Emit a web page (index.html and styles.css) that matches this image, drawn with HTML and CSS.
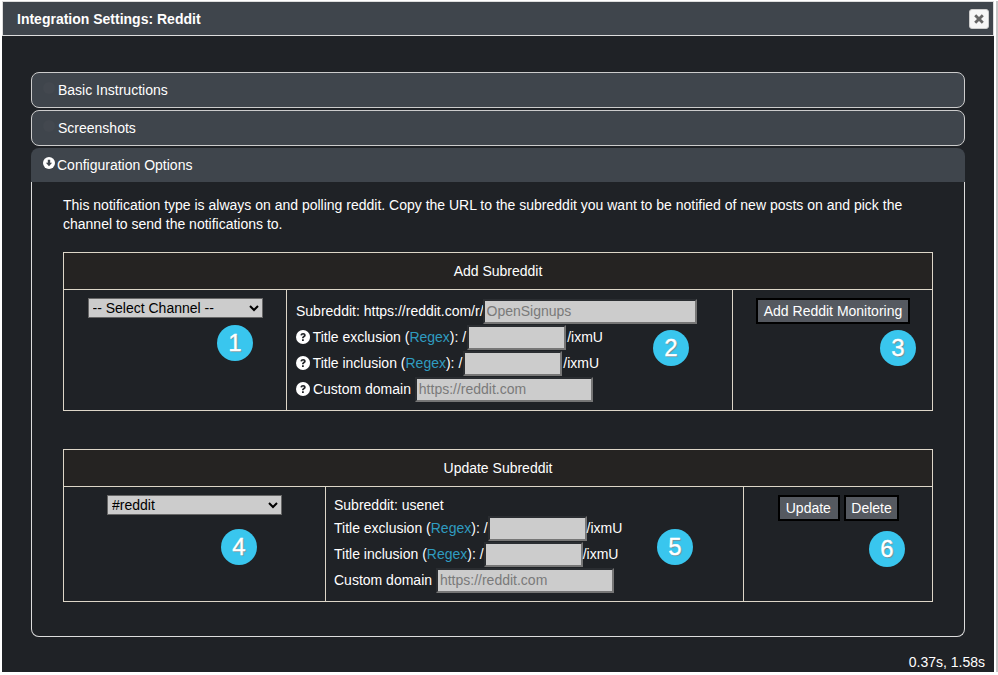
FILE: index.html

```html
<!DOCTYPE html>
<html lang="en">
<head>
  <meta charset="UTF-8" />
  <title>Integration Settings: Reddit</title>
  <link rel="stylesheet" href="styles.css">
</head>
<body>
  <div class="window">
    <div class="titlebar">
      <span class="title">Integration Settings: Reddit</span>
      <button class="close" aria-label="Close">
        <svg width="12" height="12" viewBox="0 0 12 12"><path d="M1.2 3.2 3.2 1.2 6 4 8.8 1.2 10.8 3.2 8 6 10.8 8.8 8.8 10.8 6 8 3.2 10.8 1.2 8.8 4 6z"/></svg>
      </button>
    </div>

    <div class="content">
      <h3 class="acc-head">
        <svg class="acc-icon faint" width="12" height="12" viewBox="0 0 12 12"><circle cx="6" cy="6" r="6"/></svg>
        Basic Instructions
      </h3>
      <h3 class="acc-head">
        <svg class="acc-icon faint" width="12" height="12" viewBox="0 0 12 12"><circle cx="6" cy="6" r="6"/></svg>
        Screenshots
      </h3>
      <h3 class="acc-head active">
        <svg class="acc-icon" width="12" height="12" viewBox="0 0 12 12"><circle cx="6" cy="6" r="6" fill="#fff"/><path d="M4.8 2.8h2.4v3h1.9L6 9.2 2.9 5.8h1.9z" fill="#3f454c"/></svg>
        Configuration Options
      </h3>

      <div class="acc-panel">
        <p class="intro">This notification type is always on and polling reddit. Copy the URL to the subreddit you want to be notified of new posts on and pick the channel to send the notifications to.</p>

        <table class="grid add">
          <colgroup><col class="c1"><col class="c2"><col class="c3"></colgroup>
          <tr><th colspan="3">Add Subreddit</th></tr>
          <tr>
            <td class="center">
              <select class="channel"><option>-- Select Channel --</option></select>
              <span class="badge b1">1</span>
            </td>
            <td class="fields">
              <div class="row">Subreddit: https://reddit.com/r/<input class="wide" placeholder="OpenSignups"></div>
              <div class="row">
                <svg class="help" width="14" height="14" viewBox="0 0 14 14"><circle cx="7" cy="7" r="7" fill="#fff"/><path d="M4.4 5.2C4.6 3.7 5.7 3 7.1 3c1.5 0 2.6.9 2.6 2.2 0 1-.5 1.5-1.3 2-.5.3-.7.6-.7 1.1H6c0-1 .3-1.6 1-2.1.5-.4.9-.6.9-1 0-.4-.3-.7-.8-.7s-.9.3-1 .9zM6 9.2h1.8V11H6z" fill="#1f2226"/></svg>
                Title exclusion (<a href="#">Regex</a>): /<input class="short">/ixmU
              </div>
              <div class="row">
                <svg class="help" width="14" height="14" viewBox="0 0 14 14"><circle cx="7" cy="7" r="7" fill="#fff"/><path d="M4.4 5.2C4.6 3.7 5.7 3 7.1 3c1.5 0 2.6.9 2.6 2.2 0 1-.5 1.5-1.3 2-.5.3-.7.6-.7 1.1H6c0-1 .3-1.6 1-2.1.5-.4.9-.6.9-1 0-.4-.3-.7-.8-.7s-.9.3-1 .9zM6 9.2h1.8V11H6z" fill="#1f2226"/></svg>
                Title inclusion (<a href="#">Regex</a>): /<input class="short">/ixmU
              </div>
              <div class="row">
                <svg class="help" width="14" height="14" viewBox="0 0 14 14"><circle cx="7" cy="7" r="7" fill="#fff"/><path d="M4.4 5.2C4.6 3.7 5.7 3 7.1 3c1.5 0 2.6.9 2.6 2.2 0 1-.5 1.5-1.3 2-.5.3-.7.6-.7 1.1H6c0-1 .3-1.6 1-2.1.5-.4.9-.6.9-1 0-.4-.3-.7-.8-.7s-.9.3-1 .9zM6 9.2h1.8V11H6z" fill="#1f2226"/></svg>
                Custom domain <input class="domain" placeholder="https://reddit.com">
              </div>
              <span class="badge b2">2</span>
            </td>
            <td class="center">
              <button class="btn">Add Reddit Monitoring</button>
              <span class="badge b3">3</span>
            </td>
          </tr>
        </table>

        <table class="grid update">
          <colgroup><col class="c1"><col class="c2"><col class="c3"></colgroup>
          <tr><th colspan="3">Update Subreddit</th></tr>
          <tr>
            <td class="center">
              <select class="channel"><option>#reddit</option></select>
              <span class="badge b4">4</span>
            </td>
            <td class="fields">
              <div class="row plain">Subreddit: usenet</div>
              <div class="row">Title exclusion (<a href="#">Regex</a>): /<input class="short">/ixmU</div>
              <div class="row">Title inclusion (<a href="#">Regex</a>): /<input class="short">/ixmU</div>
              <div class="row">Custom domain <input class="domain" placeholder="https://reddit.com"></div>
              <span class="badge b5">5</span>
            </td>
            <td class="center">
              <button class="btn">Update</button>
              <button class="btn">Delete</button>
              <span class="badge b6">6</span>
            </td>
          </tr>
        </table>
      </div>

      <div class="timing">0.37s, 1.58s</div>
    </div>
  </div>
</body>
</html>
```

FILE: styles.css

```css
html, body {
  margin: 0;
  height: 100%;
  background: #fff;
  overflow: hidden;
}
body {
  font-family: "Liberation Sans", Arial, sans-serif;
  font-size: 14px;
  color: #fff;
}
a {
  color: #2f9cc0;
  text-decoration: none;
}
.window {
  width: 992px;
  height: 671px;
  margin: 1px 0 0 2px;
  background: #1f2226;
  box-shadow: 2px 0 0 #fff, 4px 0 0 #c8c8c8;
}
.titlebar {
  height: 33px;
  display: flex;
  align-items: center;
  justify-content: space-between;
  padding: 0 4px 0 14px;
  background: #3f454c;
  border: 1px solid #ddd;
}
.title {
  font-weight: bold;
}
.close {
  width: 20px;
  height: 20px;
  padding: 0;
  display: flex;
  align-items: center;
  justify-content: center;
  background: #f6f6f6;
  border: 1px solid #ccc;
  border-radius: 3px;
}
.close svg {
  fill: #666;
}
.content {
  padding: 36px 29px 0;
}
.acc-head {
  box-sizing: border-box;
  height: 36px;
  margin: 0 0 2px;
  padding: 0 0 0 11px;
  display: flex;
  align-items: center;
  gap: 3px;
  font-size: 14px;
  font-weight: normal;
  background: #3f454c;
  border: 1px solid #ccc;
  border-radius: 8px;
}
.acc-head.active {
  height: 34px;
  margin: 0;
  border: 0;
  padding-left: 12px;
  gap: 2px;
  border-radius: 8px 8px 0 0;
}
.acc-icon {
  margin-top: -4px;
}
.faint {
  fill: #43484f;
}
.acc-panel {
  box-sizing: border-box;
  height: 455px;
  padding: 14px 31px 0;
  border: 1px solid #ddd;
  border-top: 0;
  border-radius: 0 0 8px 8px;
}
.intro {
  margin: 0 0 18px;
  line-height: 19px;
}
.grid {
  width: 870px;
  table-layout: fixed;
  border-collapse: collapse;
  margin-bottom: 38px;
}
.grid th, .grid td {
  border: 1px solid #ddd6c8;
  position: relative;
}
.grid th {
  height: 36px;
  padding: 0;
  font-weight: normal;
  background: #252322;
}
.grid td {
  padding: 8px 9px;
  vertical-align: top;
}
.add .c1 { width: 223px; }
.add .c3 { width: 200px; }
.update .c1 { width: 262px; }
.update .c3 { width: 189px; }
.update .fields {
  padding-left: 8px;
}
.update .btn:first-of-type {
  margin-left: 1px;
  padding-right: 7px;
}
.update .btn:last-of-type {
  padding: 0 5.5px;
}
.add .wide {
  margin-left: -1px;
}
.add .short {
  margin: 0 1px;
}
.add .btn {
  padding: 0 5.5px;
  margin-left: 1px;
}
.center {
  text-align: center;
}
.channel {
  width: 175px;
  height: 20px;
  padding: 0;
  font: 14px "Liberation Sans", Arial, sans-serif;
  color: #000;
  background: #ccc;
  border: 1px solid #666;
}
.row {
  height: 26px;
  line-height: 27px;
  white-space: nowrap;
}
.row.plain {
  height: 20px;
  line-height: 20px;
}
.help {
  vertical-align: -2px;
  margin-right: -1px;
}
input {
  box-sizing: border-box;
  height: 25px;
  padding: 0 2px;
  font: 14px "Liberation Sans", Arial, sans-serif;
  color: #000;
  background: #ccc;
  border: 2px solid;
  border-color: #2a2d31 #767676 #767676 #2a2d31;
  border-radius: 0;
}
input::placeholder {
  color: #7a7a7a;
}
.wide { width: 214px; }
.short { width: 99px; }
.domain { width: 178px; }
.btn {
  height: 26px;
  padding: 0 6px;
  font: 14px "Liberation Sans", Arial, sans-serif;
  color: #fff;
  background: #555960;
  border: 2px solid #000;
}
.badge {
  position: absolute;
  width: 36px;
  height: 36px;
  border-radius: 50%;
  background: #39c6ee;
  font-size: 24px;
  -webkit-text-stroke: 0.4px #fff;
  line-height: 36px;
  text-align: center;
  text-shadow: 1px 1px 1px #7a8a90;
}
.b1 { left: 153px; top: 35px; }
.b2 { left: 366px; top: 40px; }
.b3 { left: 147px; top: 40px; }
.b4 { left: 157px; top: 42px; }
.b5 { left: 331px; top: 42px; }
.b6 { left: 125px; top: 44px; }
.timing {
  text-align: right;
  margin: 17px -20px 0 0;
}
```
